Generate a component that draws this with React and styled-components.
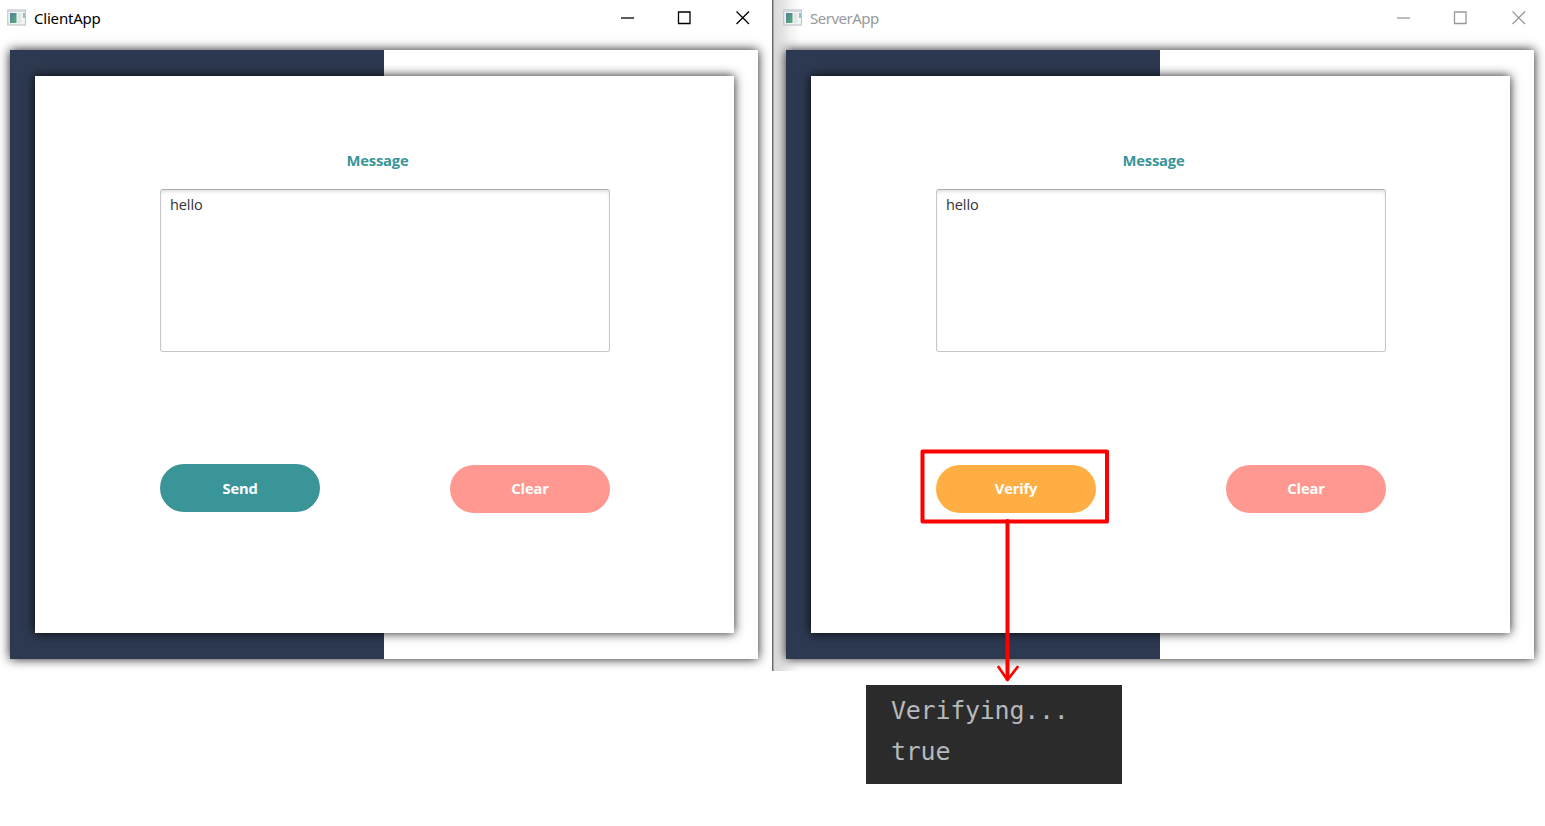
import React from "react";
import styled, { createGlobalStyle } from "styled-components";

const GlobalStyle = createGlobalStyle`
  * { box-sizing: border-box; }
  html, body { margin: 0; background: #fff; }
  body { font-family: "Open Sans", "Noto Sans", sans-serif; overflow: hidden; }
`;

const Desktop = styled.main`
  position: relative;
  width: 1545px;
  height: 826px;
  overflow: hidden;
  background: #fff;
`;

const Windows = styled.div`
  display: flex;
`;

const Window = styled.section`
  width: ${(p) => (p.$inactive ? 773 : 772)}px;
  height: 671px;
  flex: none;
  overflow: hidden;
  padding-left: ${(p) => (p.$inactive ? 14 : 10)}px;
  background: ${(p) =>
    p.$inactive
      ? "linear-gradient(90deg, #6c6c6c 0 1px, #a5a5a5 1px 2px, #dadada 2px, #e2e2e2 10px, #f3f3f3 19px, #fff 29px)"
      : "#fff"};
`;

const TitleBar = styled.header`
  display: flex;
  align-items: center;
  height: 34px;
  margin-left: -3px;
  margin-bottom: 16px;
  color: ${(p) => (p.$inactive ? "#999" : "#000")};
`;

const Title = styled.h1`
  flex: 1;
  margin: 0 0 0 8px;
  font: 400 15px/20px "Noto Sans", sans-serif;
  letter-spacing: ${(p) => (p.$inactive ? -0.5 : -0.2)}px;
  padding-top: 2px;
`;

const Controls = styled.div`
  display: flex;
  width: 132px;
  flex: none;
  margin-right: ${(p) => (p.$inactive ? 18 : 21)}px;
`;

const Backdrop = styled.div`
  width: 748px;
  height: 609px;
  padding: 26px 24px 25px 25px;
  background: linear-gradient(90deg, #2d3950 0 374px, #fff 374px);
  box-shadow: 0 0 10px rgba(0, 0, 0, 0.9);
`;

const Card = styled.div`
  display: flex;
  flex-direction: column;
  height: 557px;
  padding: 73px 124px 120px 125px;
  background: #fff;
  box-shadow: 0 0 10px rgba(0, 0, 0, 0.9);
`;

const Label = styled.label`
  height: 22px;
  margin: 0 15px 18px 0;
  text-align: center;
  color: #3a9599;
  font-size: 14.8px;
  line-height: 23px;
  font-weight: 700;
  letter-spacing: -0.2px;
`;

const MessageBox = styled.div`
  height: 163px;
  padding: 5px 9px;
  border: 1px solid #c8c8c8;
  border-top-color: #adadad;
  border-radius: 3px;
  box-shadow: inset 0 3px 4px -2px rgba(0, 0, 0, 0.18);
  color: #333;
  font-size: 14.5px;
  line-height: 20px;
  letter-spacing: -0.1px;
`;

const Actions = styled.div`
  display: flex;
  justify-content: space-between;
  margin-top: 113px;
`;

const Button = styled.button`
  width: 160px;
  height: 48px;
  padding: ${(p) => (p.$raised ? 0 : "0 0 2px")};
  border: 0;
  border-radius: 24px;
  background: ${(p) => p.$color};
  color: #fff;
  font: 700 14.7px/20px "Open Sans", sans-serif;
  letter-spacing: -0.15px;
  margin-top: ${(p) => (p.$raised ? -1 : 0)}px;
`;

const Annotation = styled.svg`
  position: absolute;
  left: 918px;
  top: 447px;
`;

const Console = styled.pre`
  width: 256px;
  height: 99px;
  margin: 14px 0 0 866px;
  padding: 5px 25px;
  background: #2b2b2b;
  color: #b5b9bb;
  font: 400 25px/41px "DejaVu Sans Mono", monospace;
  letter-spacing: -0.25px;
`;

function AppIcon() {
  return (
    <svg width="19" height="17" viewBox="0 0 19 17">
      <defs>
        <linearGradient id="screen" x2="1" y2="1">
          <stop stopColor="#547b9d" />
          <stop offset="1" stopColor="#55b276" />
        </linearGradient>
      </defs>
      <rect x=".8" y="1" width="17.8" height="15" fill="#f3f4f5" stroke="#b6bdc2" />
      <path d="M1 2h17" stroke="#d2d7db" strokeWidth="2" />
      <rect x="3" y="4" width="6.5" height="10" fill="url(#screen)" />
      <path d="M10.5 4h4v10h-4z" fill="#e4e7e9" />
      <path d="M16 4h2v5H16z" fill="#91c8bd" />
      <path d="M16 4h2v2H16z" fill="#a0b9d2" />
    </svg>
  );
}

function WindowControls({ inactive }) {
  return (
    <Controls $inactive={inactive}>
      <svg width="132" height="17" viewBox="0 0 132 17" fill="none" stroke="currentColor" strokeWidth="1.3">
        <path d="M2 9h13" />
        <path d="M59.5 3h11.5v11.5H59.5z" />
        <path d="M117.5 2.5l12.5 12.5M130 2.5l-12.5 12.5" />
      </svg>
    </Controls>
  );
}

function MessageWindow({ title, action, color, inactive }) {
  return (
    <Window $inactive={inactive}>
      <TitleBar $inactive={inactive}>
        <AppIcon />
        <Title $inactive={inactive}>{title}</Title>
        <WindowControls inactive={inactive} />
      </TitleBar>
      <Backdrop>
        <Card>
          <Label>Message</Label>
          <MessageBox>hello</MessageBox>
          <Actions>
            <Button $color={color} $raised={!inactive}>{action}</Button>
            <Button $color="#ff9891">Clear</Button>
          </Actions>
        </Card>
      </Backdrop>
    </Window>
  );
}

export default function App() {
  return (
    <>
      <GlobalStyle />
      <Desktop>
        <Windows>
          <MessageWindow title="ClientApp" action="Send" color="#3a9599" />
          <MessageWindow title="ServerApp" action="Verify" color="#ffae43" inactive />
        </Windows>
        <Console>{"Verifying...\ntrue"}</Console>
        <Annotation width="192" height="238" viewBox="0 0 192 238" fill="none" stroke="#f00" strokeLinecap="round" strokeLinejoin="round">
          <rect x="4.5" y="4.5" width="184.5" height="70" strokeWidth="4" />
          <path d="M89.5 74v158" strokeWidth="4" />
          <path d="M80.5 220l9 13 10-13" strokeWidth="2.7" />
        </Annotation>
      </Desktop>
    </>
  );
}
